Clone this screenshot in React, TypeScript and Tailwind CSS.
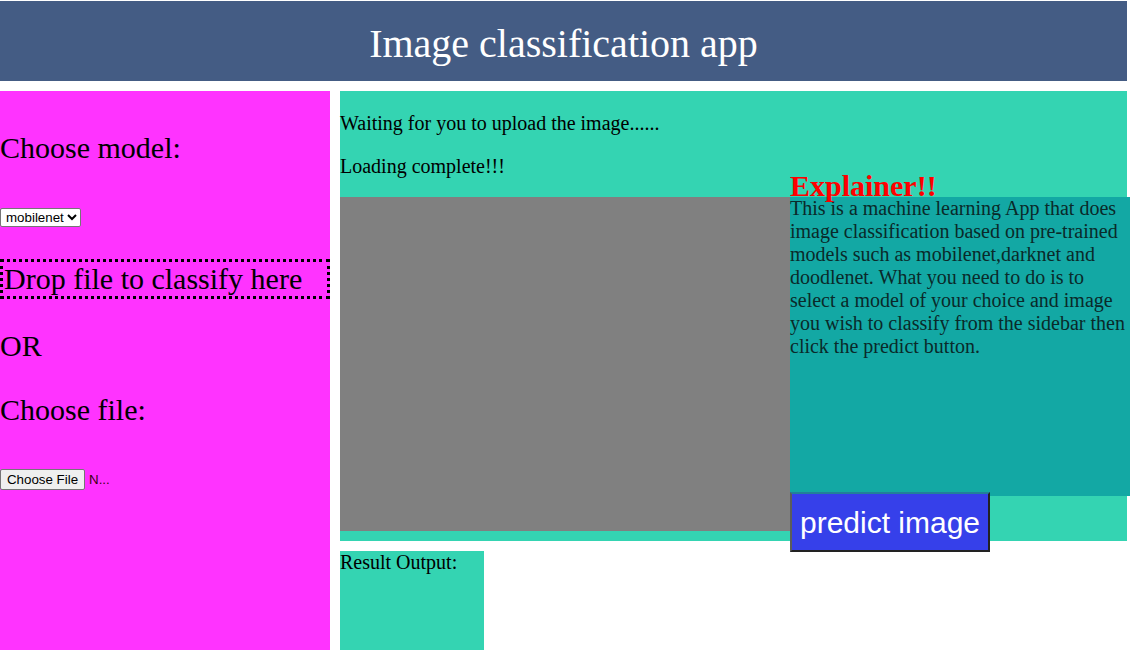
import React from "react";

const serif = { fontFamily: '"Liberation Serif", "Times New Roman", serif' };
const sans = { fontFamily: '"Liberation Sans", Arial, sans-serif' };

export default function App() {
  return (
    <div className="w-[1132px] h-[650px] overflow-hidden bg-white text-black" style={serif}>
      <header className="mt-[1px] w-[1127px] h-[80px] bg-[#445c84] text-white text-center text-[40px] leading-[46px] pt-[20px]">
        Image classification app
      </header>
      <div className="flex gap-[10px] mt-[10px]">
        <aside className="w-[330px] h-[600px] shrink-0 bg-[#ff33ff] flex flex-col items-start">
          <p className="text-[30px] leading-[34px] mt-[40px]">Choose model:</p>
          <select
            className="mt-[43px] h-[19px] w-[81px] bg-white border border-[#767676] rounded-[2px] text-[13.33px] text-black pl-[1px]"
            style={sans}
            defaultValue="mobilenet"
          >
            <option value="mobilenet">mobilenet</option>
            <option value="darknet">darknet</option>
            <option value="doodlenet">doodlenet</option>
          </select>
          <div className="mt-[32px] w-[330px] h-[40px] border-[3px] border-dotted border-black text-[30px] leading-[34px] flex items-center pl-[1px] whitespace-nowrap">
            Drop file to classify here
          </div>
          <p className="text-[30px] leading-[34px] mt-[30px]">OR</p>
          <p className="text-[30px] leading-[34px] mt-[30px]">Choose file:</p>
          <div className="mt-[42px] flex items-center text-[13.33px] leading-[15px]" style={sans}>
            <span className="h-[21px] w-[85px] flex items-center justify-center bg-[#efefef] border border-[#767676] rounded-[2px] text-black">
              Choose File
            </span>
            <span className="ml-[4px] text-[#3a0010]">N...</span>
          </div>
        </aside>
        <main className="w-[787px] shrink-0 flex flex-col gap-[10px]">
          <section className="h-[450px] bg-[#34d4b2] flex flex-col">
            <p className="text-[20px] leading-[23px] mt-[21px]">Waiting for you to upload the image......</p>
            <p className="text-[20px] leading-[23px] mt-[20px]">Loading complete!!!</p>
            <div className="flex mt-[19px]">
              <div className="w-[450px] h-[334px] bg-[#808080] shrink-0" />
              <div className="w-[340px] shrink-0 flex flex-col">
                <div className="relative h-[299px] bg-[#13a8a4] text-[20px] leading-[23px] text-[#0a2a2a]">
                  <h2 className="absolute left-0 -top-[28px] text-[30px] leading-[34px] font-bold text-[#ff0000] whitespace-nowrap">
                    Explainer!!
                  </h2>
                  This is a machine learning App that does image classification based on pre-trained models such as
                  mobilenet,darknet and doodlenet. What you need to do is to select a model of your choice and image you
                  wish to classify from the sidebar then click the predict button.
                </div>
                <button
                  className="relative -mt-[4px] w-[200px] h-[60px] bg-[#3640ea] text-white text-[30px] border-2 border-t-[#22809a] border-l-[#5c5c5c] border-r-[#222222] border-b-[#222222] flex items-center justify-center"
                  style={sans}
                >
                  predict image
                </button>
              </div>
            </div>
          </section>
          <section className="w-[144px] h-[150px] bg-[#34d4b2] text-[20px] leading-[23px]">Result Output:</section>
        </main>
      </div>
    </div>
  );
}
